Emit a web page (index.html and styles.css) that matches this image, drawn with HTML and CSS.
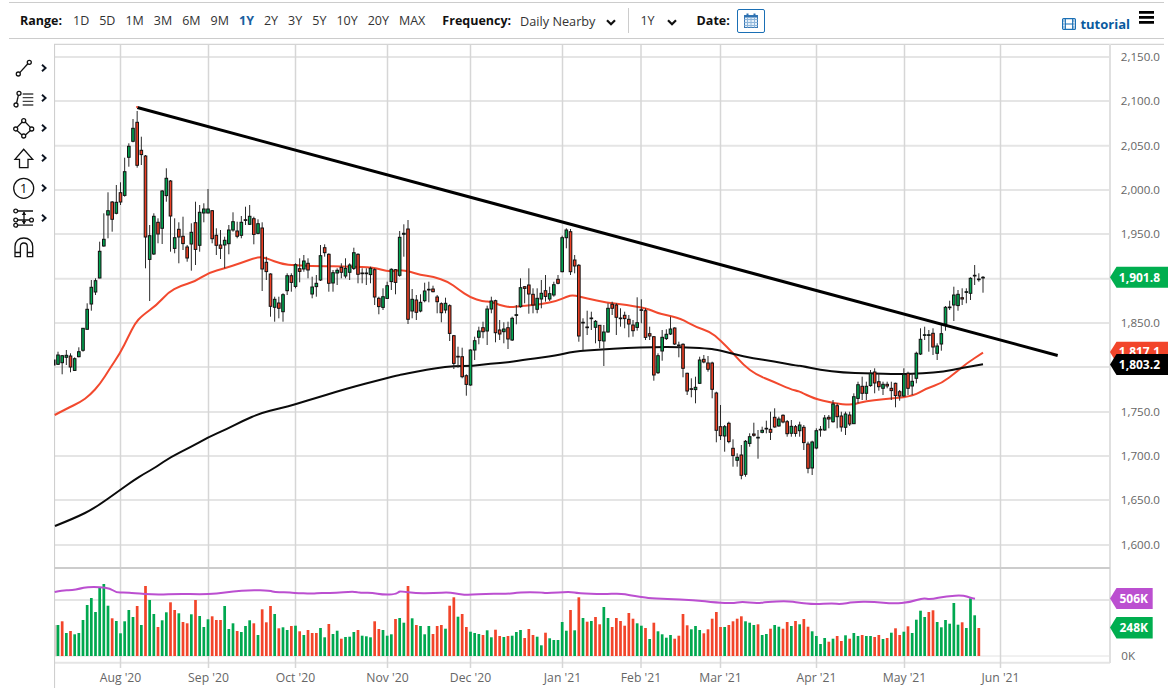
FILE: index.html
```html
<!DOCTYPE html>
<html lang="en">
<head>
<meta charset="utf-8">
<title>Gold chart</title>
<link rel="stylesheet" href="styles.css">
</head>
<body>
<div class="app">
  <header class="toolbar">
    <span class="lbl lbl-range">Range:</span>
    <nav class="ranges">
      <a>1D</a><a>5D</a><a>1M</a><a>3M</a><a>6M</a><a>9M</a><a class="on">1Y</a><a>2Y</a><a>3Y</a><a>5Y</a><a>10Y</a><a>20Y</a><a>MAX</a>
    </nav>
    <span class="lbl lbl-freq">Frequency:</span>
    <span class="val val-freq">Daily Nearby</span>
    <svg class="chev" viewBox="0 0 10 7"><path d="M1 1.2 5 5.2 9 1.2"/></svg>
    <i class="sep"></i>
    <span class="val val-per">1Y</span>
    <svg class="chev chev-per" viewBox="0 0 10 7"><path d="M1 1.2 5 5.2 9 1.2"/></svg>
    <span class="lbl lbl-date">Date:</span>
    <button class="cal">
      <svg viewBox="0 0 14 15" width="14" height="15">
        <rect class="cal-fill" x="0.5" y="2.5" width="13" height="12"/>
        <path class="cal-grid" d="M0.5 6.5H13.5M0.5 9.5H13.5M0.5 12.5H13.5M3.5 5V14.5M7 5V14.5M10.5 5V14.5"/>
        <rect class="cal-head" x="0.5" y="2.5" width="13" height="2"/>
        <rect class="cal-ring" x="2.5" y="0.5" width="2" height="3.5"/>
        <rect class="cal-ring" x="9.5" y="0.5" width="2" height="3.5"/>
      </svg>
    </button>
    <a class="tutorial">
      <svg viewBox="0 0 14 12" width="14" height="12">
        <rect class="film" x="0.6" y="0.6" width="12.8" height="10.8" rx="1"/>
        <path class="film" d="M3.3 0.6V11.4M10.7 0.6V11.4M3.3 6H10.7"/>
        <path class="film-holes" d="M0.6 3H3.3M0.6 6H3.3M0.6 9H3.3M10.7 3H13.4M10.7 6H13.4M10.7 9H13.4"/>
      </svg>
      <span>tutorial</span>
    </a>
    <svg class="burger" viewBox="0 0 15 13"><path d="M0 1.4H15M0 6.4H15M0 11.4H15"/></svg>
  </header>

  <main class="stage">
    <aside class="tools">
      <div class="tool">
        <svg class="ico" viewBox="0 0 24 24"><path d="M7.8 16.6 15.8 7.7"/><circle cx="6.3" cy="18" r="2"/><circle cx="17.3" cy="6.3" r="2"/></svg>
        <svg class="more" viewBox="0 0 6 8"><path d="M1 .8 4.6 4 1 7.2"/></svg>
      </div>
      <div class="tool">
        <svg class="ico" viewBox="0 0 24 24"><path d="M6.4 9.2 4.6 17"/><circle cx="7" cy="7.3" r="2"/><circle cx="4" cy="19" r="2"/><path class="thin" d="M10.7 8H21.3M10.7 11.7H21.3M10.7 15.3H21.3M10.7 19H21.3"/></svg>
        <svg class="more" viewBox="0 0 6 8"><path d="M1 .8 4.6 4 1 7.2"/></svg>
      </div>
      <div class="tool">
        <svg class="ico" viewBox="0 0 24 24"><path d="M5 11.4 10.2 6M13.2 6 18.4 11.4M18.4 14.4 13.4 19M10 19 5 14.4"/><circle cx="3.7" cy="13" r="2"/><circle cx="11.7" cy="4.7" r="2"/><circle cx="19.7" cy="13" r="2"/><circle cx="11.7" cy="20" r="2"/></svg>
        <svg class="more" viewBox="0 0 6 8"><path d="M1 .8 4.6 4 1 7.2"/></svg>
      </div>
      <div class="tool">
        <svg class="ico" viewBox="0 0 24 24"><path d="M11.7 3.3 3 13.3H7.5V21.7H16V13.3H20.7Z"/></svg>
        <svg class="more" viewBox="0 0 6 8"><path d="M1 .8 4.6 4 1 7.2"/></svg>
      </div>
      <div class="tool">
        <svg class="ico" viewBox="0 0 24 24"><circle cx="11.7" cy="12.3" r="10"/><text class="ico-num" x="11.7" y="17">1</text></svg>
        <svg class="more" viewBox="0 0 6 8"><path d="M1 .8 4.6 4 1 7.2"/></svg>
      </div>
      <div class="tool">
        <svg class="ico" viewBox="0 0 24 24"><path d="M5.6 5H21M5.6 14H17.5M5.6 19.2H21M12 6V18"/><path class="solid" d="M12 5.5 9.8 9H14.2ZM12 18.5 9.8 15H14.2Z"/><circle cx="3.7" cy="5" r="1.9"/><circle cx="3.7" cy="14" r="1.9"/><circle cx="3.7" cy="19.2" r="1.9"/><circle cx="19.5" cy="14" r="1.9"/></svg>
        <svg class="more" viewBox="0 0 6 8"><path d="M1 .8 4.6 4 1 7.2"/></svg>
      </div>
      <div class="tool">
        <svg class="ico" viewBox="0 0 24 24"><path d="M3 20.7V10.5C3 5.3 6.8 2 11.8 2S20.7 5.3 20.7 10.5V20.7H15.3V10.5C15.3 8.4 13.9 7 11.8 7S8.4 8.4 8.4 10.5V20.7ZM3 16.5H8.4M15.3 16.5H20.7"/></svg>
      </div>
    </aside>

    <svg class="chart" viewBox="54 40 1114 654" width="1114" height="654">
      <g class="hgrid">
        <path d="M54 57H1110M54 101H1110M54 145.7H1110M54 190H1110M54 234H1110M54 278.7H1110M54 323H1110M54 367H1110M54 412H1110M54 456H1110M54 500H1110M54 545H1110M54 600H1110M54 662.7H1110"/>
      </g>
      <path class="baseline" d="M54 656H1110"/>
      <g class="vgrid">
        <path d="M120.5 44V668M208.5 44V668M295.5 44V668M387.5 44V668M470.5 44V668M562.5 44V668M641 44V668M720.5 44V668M816.5 44V668M904.5 44V668M1000.5 44V668"/>
      </g>
      <path class="frame-top" d="M54 44.3H1164"/>
      <path class="frame-left" d="M54.5 44V688"/>
      <path class="frame-right" d="M1110 44V663"/>
      <path class="divider" d="M54 568H1110"/>

      <g id="volumes"></g>
      <path id="volma" class="ma-vol"/>
      <path id="ma50" class="ma-red"/>
      <path id="ma200" class="ma-black"/>
      <g id="candles"></g>
      <path class="trend" d="M137.3 107.5 1057.7 355.5"/>
      <circle class="trend-dot" cx="137" cy="107" r="1"/>

      <g class="yaxis">
        <text x="1160" y="61">2,150.0</text>
        <text x="1160" y="105">2,100.0</text>
        <text x="1160" y="150">2,050.0</text>
        <text x="1160" y="194">2,000.0</text>
        <text x="1160" y="238">1,950.0</text>
        <text x="1160" y="327">1,850.0</text>
        <text x="1160" y="416">1,750.0</text>
        <text x="1160" y="460">1,700.0</text>
        <text x="1160" y="504">1,650.0</text>
        <text x="1160" y="549">1,600.0</text>
        <text x="1135" y="660">0K</text>
      </g>
      <g class="xaxis">
        <text x="120.5" y="682">Aug '20</text>
        <text x="208.5" y="682">Sep '20</text>
        <text x="295.5" y="682">Oct '20</text>
        <text x="387.5" y="682">Nov '20</text>
        <text x="470.5" y="682">Dec '20</text>
        <text x="562.5" y="682">Jan '21</text>
        <text x="641" y="682">Feb '21</text>
        <text x="720.5" y="682">Mar '21</text>
        <text x="816.5" y="682">Apr '21</text>
        <text x="904.5" y="682">May '21</text>
        <text x="1000.5" y="682">Jun '21</text>
      </g>

      <g class="tags">
        <path class="tag-green" d="M1110 277.2 1116.5 266.7H1168V287.7H1116.5Z"/>
        <text x="1160" y="281.5">1,901.8</text>
        <path class="tag-red" d="M1110 352 1116.5 341.7H1168V363H1116.5Z"/>
        <text x="1160" y="356">1,817.1</text>
        <path class="tag-black" d="M1110 364.5 1116.5 354H1168V375H1116.5Z"/>
        <text x="1160" y="369">1,803.2</text>
        <path class="tag-purple" d="M1110 598.5 1116.5 588H1152.7V609H1116.5Z"/>
        <text x="1148" y="602.5">506K</text>
        <path class="tag-green" d="M1110 627.5 1116.5 617H1152.7V638.5H1116.5Z"/>
        <text x="1148" y="632">248K</text>
      </g>
    </svg>
  </main>
</div>
<script src="chart.js"></script>
</body>
</html>
```
FILE: styles.css
```css
* { box-sizing: border-box; }
html, body { margin: 0; padding: 0; background: #fff; }
.app { width: 1168px; height: 694px; overflow: hidden; font-family: "Open Sans", "Noto Sans", sans-serif; color: #222; }

.toolbar {
  height: 37px;
  margin: 2px 4px 0 9px;
  border-top: 1px solid #ccc;
  border-bottom: 1px solid #ccc;
  padding-left: 11px;
  display: flex;
  align-items: center;
  font-size: 12.5px;
}
.lbl { font-weight: 700; color: #111; font-size: 12.5px; }
.lbl-range { width: 53px; }
.ranges { display: flex; gap: 10px; }
.ranges a { color: #333; }
.ranges a.on { color: #1a5fa0; font-weight: 700; }
.lbl-freq { margin-left: 17px; }
.val { color: #333; }
.val-freq { margin-left: 9px; font-size: 12.7px; }
.chev { width: 10px; height: 7px; margin-left: 11px; margin-top: 3px; fill: none; stroke: #111; stroke-width: 2.2; }
.sep { width: 1px; height: 25px; background: #ccc; margin-left: 12px; }
.val-per { margin-left: 11px; }
.chev-per { margin-left: 12px; }
.lbl-date { margin-left: 20px; }
.cal {
  width: 28px; height: 24px; margin-left: 7px; padding: 0;
  border: 1px solid #1a6fb5; border-radius: 2px; background: #fff;
  display: flex; align-items: center; justify-content: center;
}
.cal-fill { fill: #e4eff9; stroke: #3a79b5; stroke-width: 1; }
.cal-grid { fill: none; stroke: #8fb6da; stroke-width: 1; }
.cal-head { fill: #2f72b2; }
.cal-ring { fill: #2f72b2; }
.tutorial { margin-left: auto; margin-top: 6px; display: flex; align-items: center; gap: 4px; color: #0a5a9e; font-weight: 700; font-size: 13px; }
.film { fill: none; stroke: #1a6fb5; stroke-width: 1.2; }
.film-holes { fill: none; stroke: #1a6fb5; stroke-width: 1; stroke-dasharray: 1 1; }
.burger { width: 15px; height: 13px; margin-left: 9px; margin-right: 10px; margin-top: -6px; fill: none; stroke: #000; stroke-width: 2.6; }

.stage { display: flex; height: 654px; margin-top: 1px; }
.tools { width: 54px; flex: none; padding: 13px 0 0 12px; display: flex; flex-direction: column; }
.tool { height: 30px; display: flex; align-items: center; gap: 5px; }
.ico { width: 24px; height: 24px; fill: none; stroke: #111; stroke-width: 1.3; overflow: visible; }
.ico .thin { stroke: #444; stroke-width: 1.3; }
.ico .solid { fill: #111; stroke: none; }
.ico-num { font-family: "Open Sans", sans-serif; font-size: 13.5px; fill: #111; stroke: none; text-anchor: middle; }
.more { width: 6px; height: 8px; fill: none; stroke: #0c1420; stroke-width: 1.9; }

.chart { display: block; flex: none; font-family: "Open Sans", "Noto Sans", sans-serif; }
.hgrid path { fill: none; stroke: #e5e5e5; stroke-width: 2; }
.baseline { fill: none; stroke: #e2e2e2; stroke-width: 1; }
.vgrid path { fill: none; stroke: #d6d6d6; stroke-width: 1.5; }
.frame-top { fill: none; stroke: #d4d4d4; stroke-width: 1.2; }
.frame-left { fill: none; stroke: #cfcfcf; stroke-width: 1.2; }
.frame-right { fill: none; stroke: #e0e0e0; stroke-width: 2; }
.divider { fill: none; stroke: #cccccc; stroke-width: 2; }

.vol-g { fill: #00a84f; }
.vol-r { fill: #f2452a; }
.vol-stub { fill: #dccfca; }
.ma-vol { fill: none; stroke: #bb4fd0; stroke-width: 2; stroke-linejoin: round; }
.ma-red { fill: none; stroke: #f2492e; stroke-width: 2; stroke-linejoin: round; }
.ma-black { fill: none; stroke: #0b0b0b; stroke-width: 2; stroke-linejoin: round; }
.wick { stroke: #2b2b2b; stroke-width: 1; fill: none; }
.body-g { fill: #00a651; stroke: #111; stroke-width: 1; }
.body-r { fill: #ee3f24; stroke: #111; stroke-width: 1; }
.trend { fill: none; stroke: #000; stroke-width: 3; }
.trend-dot { fill: #f2492e; }

.yaxis text { font-size: 11.6px; fill: #666; text-anchor: end; }
.xaxis text { font-size: 12.2px; fill: #666; text-anchor: middle; }
.tags text { font-size: 12px; font-weight: 700; fill: #fff; text-anchor: end; }
.tag-green { fill: #00ae4f; }
.tag-red { fill: #f2452a; }
.tag-black { fill: #000; }
.tag-purple { fill: #bb4fd0; }
```
FILE: chart.js
```js
// Daily gold candles, volume bars and moving averages, in page pixel coordinates.
var NS = "http://www.w3.org/2000/svg";
var X0 = 58, STEP = 4.1667;

function xOf(i) { return X0 + STEP * i; }
function el(tag, attrs, parent) {
  var n = document.createElementNS(NS, tag);
  for (var k in attrs) n.setAttribute(k, attrs[k]);
  parent.appendChild(n);
  return n;
}

// colour top,bottom,high,low measured at 3x; each block has its own y origin
var blocks = [
  [240, "g345,373,335,375 g347,368,345,403 g346,352,330,375 r348,381,340,397 g356,391,352,393 g335,350,322,352 g265,331,265,335 g208,268,190,268 g142,192,120,212 g122,156,115,165 g34,114,5,115"],
  [105, "g403,423,325,425 g317,330,262,400 r291,343,288,380 g292,325,240,328 r263,291,232,300 g200,271,158,275 g124,157,115,185 g70,109,42,112 r52,181,18,188 r136,149,95,180 r153,396,150,490 g392,463,360,588 g334,447,325,450 r352,387,340,415 g258,370,255,417 g220,272,190,290 r228,333,225,440 g398,430,340,445 r373,396,352,475 r394,416,335,435 r426,459,420,470 g382,417,355,497 r353,433,290,480 g322,421,300,440 g312,324,295,352 g312,324,252,325 r317,401,315,415 r391,421,370,450 r420,430,375,462 g406,420,395,490 g375,416,360,448 g350,375,322,380 r378,394,350,400 g352,391,333,400 r344,346,305,360 g334,358,300,360 r341,388,335,418 g356,385,343,388 r369,492,352,558 r472,500,455,525 r507,604,505,635 g583,607,575,650 r594,610,575,640 g569,620,565,650 g512,557,505,570 r512,532,505,560 g479,544,475,550 r491,499,460,532"],
  [215, "g138,162,120,170 r145,165,130,190 g216,237,185,250 g205,215,180,245 g122,195,90,198 r98,113,88,125 r118,205,115,230 g173,204,165,230 g166,174,160,210 r157,172,145,190 g160,183,130,190 g150,172,145,195 g113,160,98,165 r118,178,115,205 r174,176,160,205 r174,176,160,210 g160,179,155,205 r164,246,160,270 r250,275,245,298 g245,277,220,285 g212,250,200,252 g163,200,160,225 r164,202,162,238 g67,181,48,185 g55,58,28,125 r42,313,15,327 g253,288,222,310 r255,292,240,315 g262,288,238,292 g228,257,203,262 r223,225,200,262 r222,230,212,232 r246,260,240,295 r266,293,262,322 g265,285,248,295 r272,355,268,378 r362,445,360,462 r424,426,395,458 r425,485,398,490 r482,508,478,542 g405,510,403,512 g377,405,365,435 g348,367,335,388 r338,350,320,370 g282,348,272,390 g258,282,245,295 r257,353,254,382 r345,357,315,375 g342,350,322,385 r338,372,320,402 g310,375,305,378 g299,301,270,328 g218,275,190,278 r215,220,213,265 r210,237,160,296 r238,270,220,295 g250,283,220,295 g235,252,195,280 r227,244,180,260 g236,252,215,258 g209,240,200,245 r193,205,180,208 g68,170,62,172 g45,68,40,100 r50,170,42,180"],
  [240, "r60,78,45,100 r76,288,72,305 g247,249,235,330 r261,263,212,285 g234,236,215,270 g244,262,240,310 r256,302,255,325 g276,303,255,378 g205,276,190,278 r193,205,185,225 r195,232,190,285 r234,236,205,260 r226,236,215,265 r238,252,225,292 r255,272,240,290 g248,262,172,272 r209,211,178,250 r212,292,205,300 r281,288,260,300 r290,405,288,422 g347,398,340,402 g292,333,270,362 g283,296,268,300 g267,282,230,285 r264,312,262,315 r315,317,305,352 r313,385,310,412 r400,453,398,465 r446,448,415,472 g442,449,410,490 g360,430,350,432 r358,366,345,370 r369,388,348,395 r369,448,365,475 r459,571,455,607 r560,587,495,600 g560,588,555,635 r550,605,545,610 r625,647,598,680 g652,661,640,680 r645,706,615,718 g604,703,600,710 g590,610,580,620 r582,586,548,590 g592,594,570,656 g571,577,560,580 r565,567,542,580 r568,577,515,600 r532,561,505,563 g537,558,530,560 r526,546,523,550 r545,581,540,590 g559,580,540,590 r560,580,555,590 g555,572,545,590"],
  [240, "r562,608,555,630 r612,685,605,700 g606,684,602,705 g572,624,565,628 g568,570,558,590 g534,570,525,572 r532,537,525,565 g492,545,480,548 r497,530,490,565 r528,561,515,575 g522,562,515,585 r525,552,515,558 g470,551,460,552 g434,475,425,490 r439,460,410,480 g439,460,425,480 g400,437,390,440 r396,429,385,460 r425,440,400,452 g433,445,425,465 r433,438,425,445 r445,452,425,480 r430,467,428,502 r455,468,450,482 g403,468,385,470 r400,445,395,465 g424,438,400,465 g340,415,335,430 g298,342,265,345 g284,286,260,300 g284,286,270,335 r280,321,265,345 g318,340,310,360 g281,312,255,332 g202,252,198,272 g201,203,182,210 g165,195,140,243 g163,197,150,212 r173,177,145,195 g155,157,145,190 g115,160,112,180 g106,108,75,135 g117,119,100,125 g112,114,108,158"]
];

var volumes = "g195 r184 g219 r213 g223 g219 g180 g135 g114 g156 g84 g72 g137 r175 g183 g220 g184 g150 g171 r138 g195 r78 g120 g162 r201 g181 g157 r127 r150 g160 r186 r190 g163 r120 g168 g201 g178 r169 r180 r180 g138 g207 g190 r213 g216 g198 g181 r190 g225 r148 r187 r138 g162 r205 g202 g210 r198 g197 r214 g225 r210 r219 r219 g204 g232 r192 g222 g212 r236 g231 g230 g216 r210 g227 g229 g232 r184 r207 g210 g227 g223 r177 g174 " +
  "g188 r78 g175 r195 g198 g223 g198 r222 r198 r195 g206 r137 r112 g170 r162 r201 g215 g219 g222 r225 g211 g232 r209 r228 g231 r228 g227 g216 g210 r234 r207 r225 g230 g256 r218 g235 g240 g240 g186 g212 r150 g211 r112 g174 r185 g183 r171 r193 g141 g174 r201 r174 r183 r197 r159 r176 g190 g197 r204 g237 r188 g214 g223 g233 g225 r236 r227 r162 r196 g208 g198 g210 r220 r208 r176 r156 r201 g201 r195 r184 r176 r169 g184 g188 g195 r193 g225 g222 r206 g195 g200 r206 r186 g198 r183 " +
  "g193 r177 r200 g214 g228 g252 g234 r245 g236 r228 r243 g226 r236 g219 g228 r225 g228 g228 r231 r225 g237 r234 g218 r205 r225 g215 r199 g219 g179 g152 g171 r156 r151 g186 g202 g180 g191 g129 g194 r187 g204 g115 g166 r204";

function pts(base, xoff, list) {
  return list.map(function (p) { return [xoff + p[0] / 3, base + p[1] / 3]; });
}

// a smooth curve through the midpoints of the measured points
function curve(points) {
  var d = "M" + points[0][0].toFixed(1) + " " + points[0][1].toFixed(1);
  for (var i = 1; i < points.length - 1; i++) {
    var mx = (points[i][0] + points[i + 1][0]) / 2, my = (points[i][1] + points[i + 1][1]) / 2;
    d += "Q" + points[i][0].toFixed(1) + " " + points[i][1].toFixed(1) + " " + mx.toFixed(1) + " " + my.toFixed(1);
  }
  var last = points[points.length - 1];
  return d + "L" + last[0].toFixed(1) + " " + last[1].toFixed(1);
}

var ma50 = [].concat(
  pts(240, 0, [[164,525],[200,506],[240,487],[270,465],[300,432],[330,385],[360,340],[385,290],[405,250],[425,228],[470,195],[505,157],[540,138],[585,125],[625,98],[675,85],[720,70],[775,50],[800,55],[845,72],[885,76],[950,78],[1050,80],[1120,82],[1165,95],[1198,91]]),
  pts(240, 400, [[0,90],[30,95],[60,105],[100,110],[145,125],[175,148],[210,172],[250,185],[270,184],[300,195],[330,202],[360,198],[420,193],[470,183],[500,170],[520,165],[560,175],[620,188],[680,195],[740,205],[770,218],[800,226],[840,235],[890,262],[930,275],[960,300],[1000,340],[1030,375],[1070,405],[1120,425],[1170,447],[1198,455]]),
  pts(240, 800, [[0,455],[40,475],[100,490],[155,495],[180,488],[220,480],[280,475],[340,468],[380,445],[425,430],[470,395],[500,370],[549,338]])
);

var ma200 = [].concat(
  [[55,526],[75,518],[95,508],[120,490]],
  pts(240, 0, [[405,718],[430,703],[470,680],[510,652],[570,622],[625,592],[680,567],[730,542],[780,520],[840,505],[890,492],[950,473],[1010,455],[1070,438],[1120,425],[1198,405]]),
  pts(240, 400, [[0,405],[50,395],[110,384],[160,378],[220,378],[270,371],[330,367],[380,358],[470,347],[520,334],[600,329],[680,324],[760,321],[840,321],[920,325],[950,329],[1000,342],[1060,355],[1120,364],[1198,378]]),
  pts(240, 800, [[0,377],[60,390],[130,398],[200,400],[300,403],[370,400],[430,395],[490,383],[549,373]])
);

var volma = [].concat(
  pts(560, 0, [[164,96],[190,90],[215,91],[240,86],[262,81],[300,81],[330,85],[350,98],[375,97],[400,100],[470,104],[540,101],[600,103],[650,101],[700,94],[750,90],[810,92],[825,97],[860,96],[880,99],[940,101],[960,98],[1000,100],[1060,94],[1085,99],[1115,98],[1150,104],[1185,103],[1198,95]]),
  pts(560, 400, [[0,94],[50,100],[100,99],[150,97],[175,103],[210,105],[260,101],[320,102],[360,97],[420,97],[440,100],[510,95],[535,100],[610,103],[660,100],[690,106],[720,110],[740,114],[800,117],[880,120],[950,128],[1000,130],[1025,125],[1070,130],[1100,126],[1160,123],[1198,128]]),
  pts(560, 800, [[0,128],[40,133],[100,130],[120,133],[160,126],[220,125],[280,131],[330,127],[370,113],[390,119],[440,108],[490,106],[510,113],[525,116]])
);

document.getElementById("ma50").setAttribute("d", curve(ma50));
document.getElementById("ma200").setAttribute("d", curve(ma200));
document.getElementById("volma").setAttribute("d", curve(volma));

var vg = document.getElementById("volumes");
el("rect", { "class": "vol-stub", x: 55, y: 625, width: 2, height: 31 }, vg);
volumes.split(" ").forEach(function (s, i) {
  var top = +s.slice(1), y = 560 + top / 3;
  el("rect", { "class": s[0] === "g" ? "vol-g" : "vol-r", x: (xOf(i) - 1.35).toFixed(2), y: y.toFixed(1), width: 2.7, height: (656 - y).toFixed(1) }, vg);
});

var cg = document.getElementById("candles");
el("rect", { "class": "body-g", x: 54.5, y: 360, width: 0.5, height: 5 }, cg);
var idx = 0;
blocks.forEach(function (b) {
  b[1].split(" ").forEach(function (s) {
    var v = s.slice(1).split(",").map(function (n) { return b[0] + n / 3; });
    var x = xOf(idx++);
    el("path", { "class": "wick", d: "M" + x.toFixed(2) + " " + v[2].toFixed(1) + "V" + v[3].toFixed(1) }, cg);
    el("rect", { "class": s[0] === "g" ? "body-g" : "body-r", x: (x - 1.3).toFixed(2), y: v[0].toFixed(1), width: 2.6, height: Math.max(0.4, v[1] - v[0]).toFixed(1) }, cg);
  });
});
```
